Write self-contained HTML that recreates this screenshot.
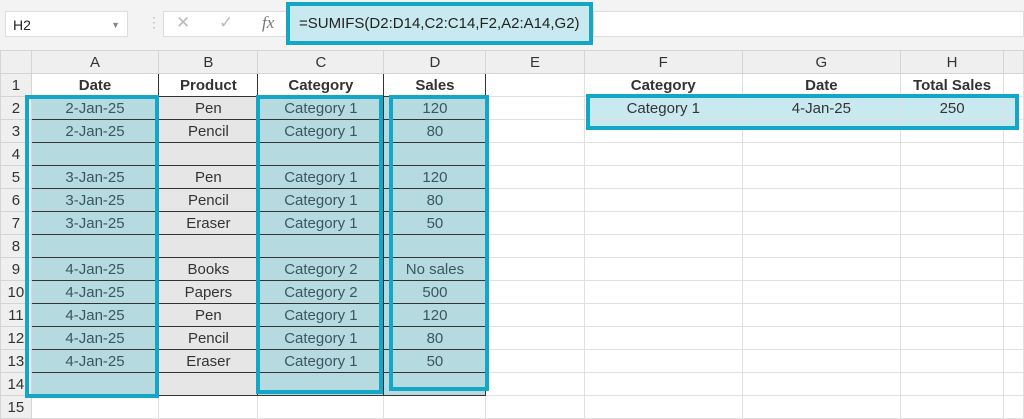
<!DOCTYPE html><html><head><style>
body{margin:0;width:1024px;height:403px;overflow:hidden;background:#fff;font-family:"Liberation Sans",sans-serif;position:relative}
.top{position:absolute;left:0;top:0;width:1024px;height:50px;background:#f3f3f3}
.nb{position:absolute;left:5px;top:11px;width:123px;height:26px;background:#fff;border:1px solid #dcdcdc;font-size:14px;line-height:26px;padding-left:7px;box-sizing:border-box;color:#222}
.fx{position:absolute;left:163px;top:11px;width:125px;height:26px;background:#fff;border:1px solid #dcdcdc;box-sizing:border-box;color:#bbb;font-size:17px}
.fbox{position:absolute;left:286px;top:2px;width:307px;height:43px;box-sizing:border-box;border:4px solid #13a6c6;background:#c9e9f0;font-size:15px;line-height:35px;padding-left:9px;color:#222}
.fright{position:absolute;left:593px;top:11px;width:431px;height:26px;background:#fff;border:1px solid #dcdcdc;box-sizing:border-box}
table{position:absolute;left:0;top:50px;border-collapse:collapse;table-layout:fixed;font-size:15px}
td{height:22px;padding:0;text-align:center;border:1px solid #e0e0e0;color:#333;white-space:nowrap;overflow:hidden}
tr.h td{background:#efefef;color:#333;border-color:#d4d4d4}
td.r{background:#efefef;border-color:#d4d4d4}
td.d{border:1px solid #333}
td.g{background:#e6e6e6}
td.b{font-weight:bold;color:#333}
td.s{background:#b5dbe0;color:#3c5560}
.hl{position:absolute;border:4px solid #13a6c6;box-sizing:border-box}
</style></head><body>
<div class="top"></div>
<div class="nb">H2<span style="position:absolute;right:7px;font-size:9px;color:#888">▼</span></div>
<div style="position:absolute;left:147px;top:14px;color:#bbb;font-size:14px">⋮</div>
<div class="fx"><span style="position:absolute;left:12px;top:1px">✕</span><span style="position:absolute;left:55px;top:1px">✓</span><span style="position:absolute;left:98px;top:1px;color:#777;font-style:italic;font-family:'Liberation Serif',serif">fx</span></div>
<div class="fright"></div>
<div class="fbox">=SUMIFS(D2:D14,C2:C14,F2,A2:A14,G2)</div>
<div style="position:absolute;left:586px;top:94px;width:433px;height:36px;background:#c9e9f0"></div>
<table>
<colgroup><col style="width:31px"><col style="width:129px"><col style="width:100px"><col style="width:127px"><col style="width:103px"><col style="width:100px"><col style="width:160px"><col style="width:160px"><col style="width:104px"><col style="width:20px"></colgroup>
<tr class="h"><td></td><td>A</td><td>B</td><td>C</td><td>D</td><td>E</td><td>F</td><td>G</td><td>H</td><td></td></tr>
<tr><td class="r">1</td><td class="d b">Date</td><td class="d b">Product</td><td class="d b">Category</td><td class="d b">Sales</td><td></td><td class="b">Category</td><td class="b">Date</td><td class="b">Total Sales</td><td></td></tr>
<tr><td class="r">2</td><td class="d s">2-Jan-25</td><td class="d g">Pen</td><td class="d s">Category 1</td><td class="d s">120</td><td></td><td>Category 1</td><td>4-Jan-25</td><td>250</td><td></td></tr>
<tr><td class="r">3</td><td class="d s">2-Jan-25</td><td class="d g">Pencil</td><td class="d s">Category 1</td><td class="d s">80</td><td></td><td></td><td></td><td></td><td></td></tr>
<tr><td class="r">4</td><td class="d s"></td><td class="d g"></td><td class="d s"></td><td class="d s"></td><td></td><td></td><td></td><td></td><td></td></tr>
<tr><td class="r">5</td><td class="d s">3-Jan-25</td><td class="d g">Pen</td><td class="d s">Category 1</td><td class="d s">120</td><td></td><td></td><td></td><td></td><td></td></tr>
<tr><td class="r">6</td><td class="d s">3-Jan-25</td><td class="d g">Pencil</td><td class="d s">Category 1</td><td class="d s">80</td><td></td><td></td><td></td><td></td><td></td></tr>
<tr><td class="r">7</td><td class="d s">3-Jan-25</td><td class="d g">Eraser</td><td class="d s">Category 1</td><td class="d s">50</td><td></td><td></td><td></td><td></td><td></td></tr>
<tr><td class="r">8</td><td class="d s"></td><td class="d g"></td><td class="d s"></td><td class="d s"></td><td></td><td></td><td></td><td></td><td></td></tr>
<tr><td class="r">9</td><td class="d s">4-Jan-25</td><td class="d g">Books</td><td class="d s">Category 2</td><td class="d s">No sales</td><td></td><td></td><td></td><td></td><td></td></tr>
<tr><td class="r">10</td><td class="d s">4-Jan-25</td><td class="d g">Papers</td><td class="d s">Category 2</td><td class="d s">500</td><td></td><td></td><td></td><td></td><td></td></tr>
<tr><td class="r">11</td><td class="d s">4-Jan-25</td><td class="d g">Pen</td><td class="d s">Category 1</td><td class="d s">120</td><td></td><td></td><td></td><td></td><td></td></tr>
<tr><td class="r">12</td><td class="d s">4-Jan-25</td><td class="d g">Pencil</td><td class="d s">Category 1</td><td class="d s">80</td><td></td><td></td><td></td><td></td><td></td></tr>
<tr><td class="r">13</td><td class="d s">4-Jan-25</td><td class="d g">Eraser</td><td class="d s">Category 1</td><td class="d s">50</td><td></td><td></td><td></td><td></td><td></td></tr>
<tr><td class="r">14</td><td class="d s"></td><td class="d g"></td><td class="d s"></td><td class="d s"></td><td></td><td></td><td></td><td></td><td></td></tr>
<tr><td class="r">15</td><td></td><td></td><td></td><td></td><td></td><td></td><td></td><td></td><td></td></tr>
</table>
<div class="hl" style="left:25px;top:95px;width:134px;height:303px"></div>
<div class="hl" style="left:256px;top:95px;width:127px;height:299px"></div>
<div class="hl" style="left:389px;top:95px;width:100px;height:296px"></div>
<div class="hl" style="left:586px;top:94px;width:433px;height:36px"></div>
</body></html>
